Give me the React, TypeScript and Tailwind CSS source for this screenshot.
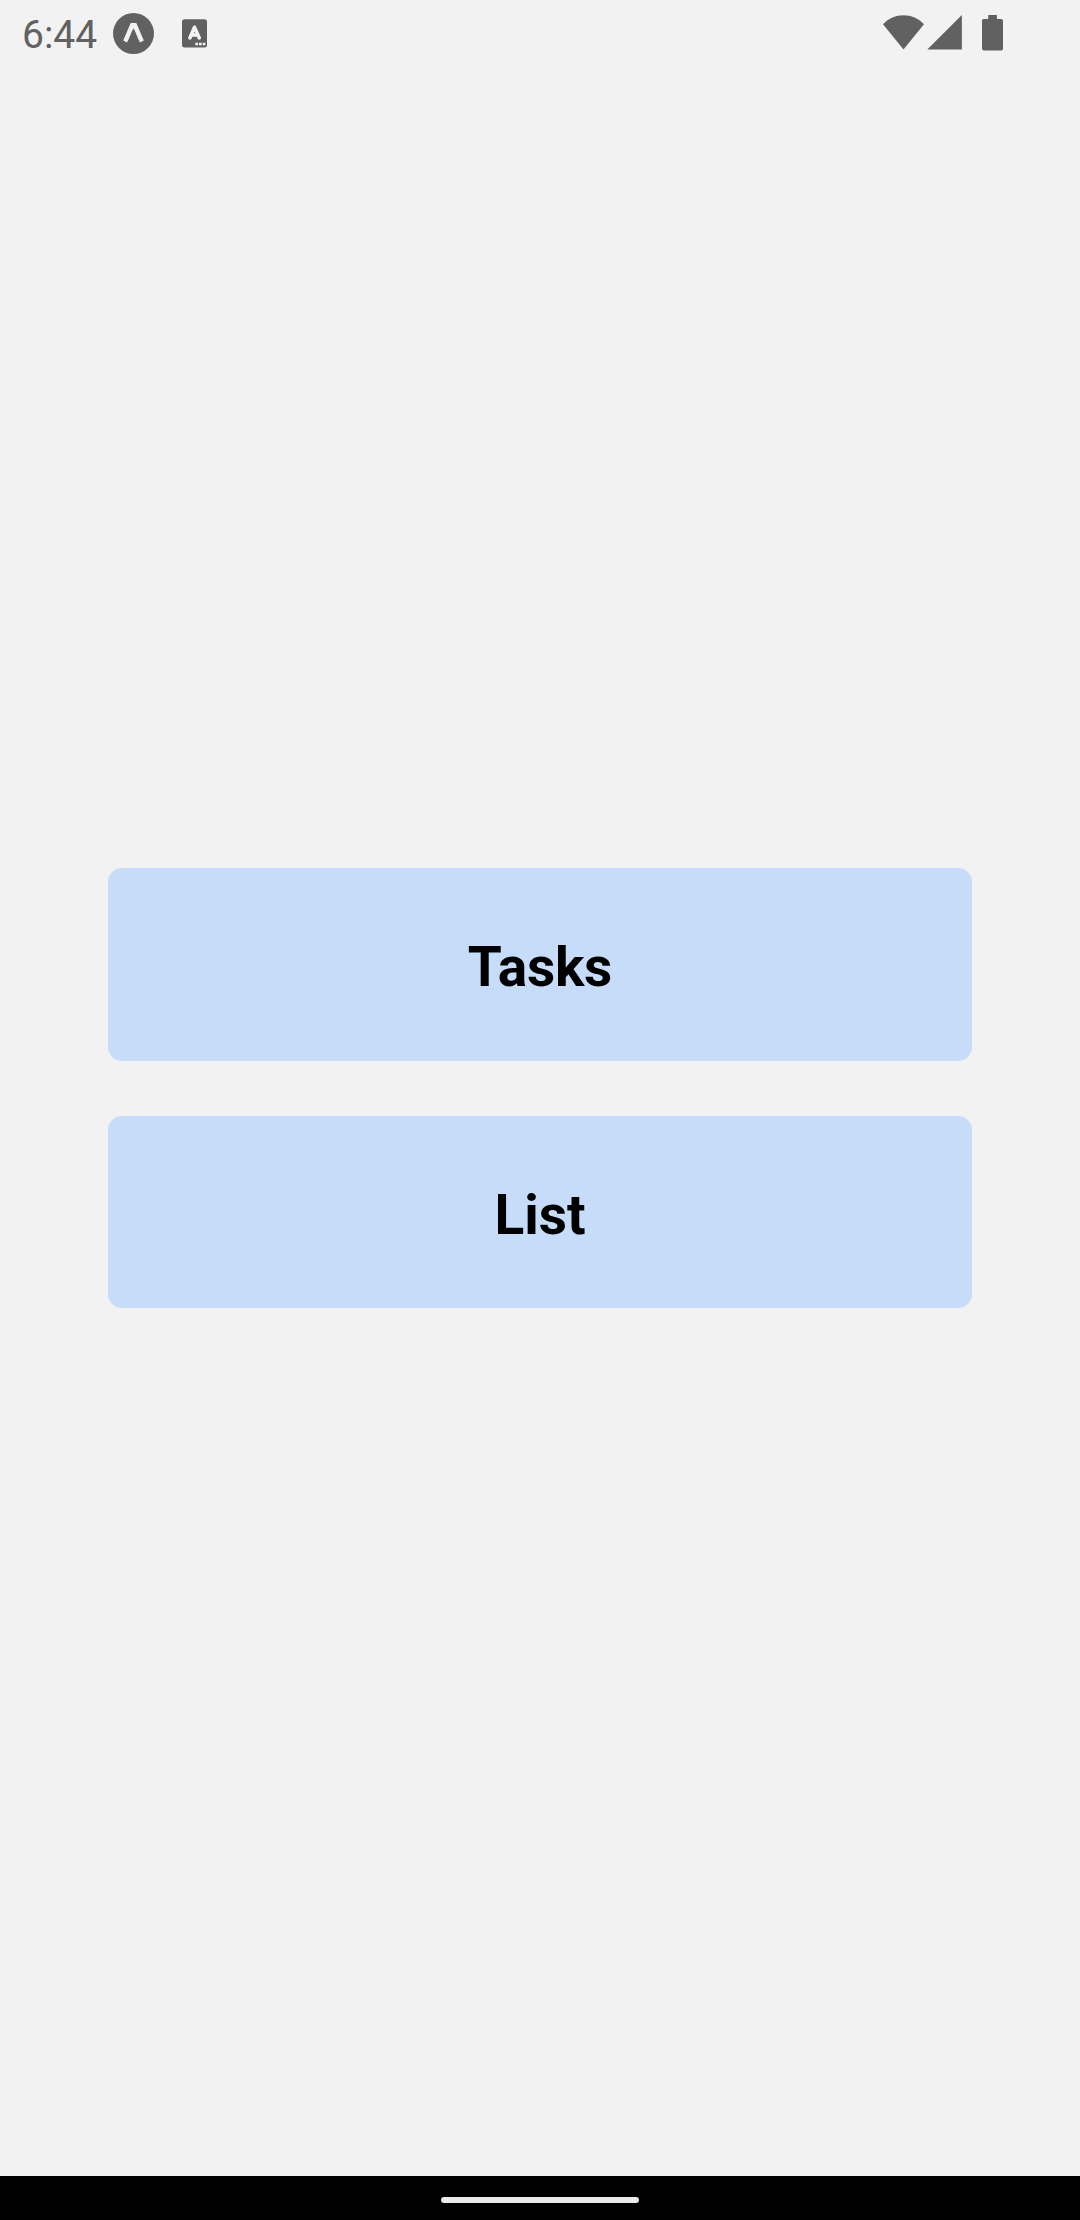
function StatusBar() {
  return (
    <header className="flex h-[66px] shrink-0 items-start text-[#616161]">
      <span className="ml-[22px] mt-[12px] w-[76px] whitespace-nowrap text-[39px] leading-[46px]">
        6:44
      </span>
      <svg className="ml-[15px] mt-[13px]" width="41" height="41" viewBox="0 0 41 41" aria-hidden="true">
        <circle cx="20.5" cy="20.5" r="20.5" fill="currentColor" />
        <path
          d="M17.7 10h5.6l7.5 17.6-3.800 2c-2.200-3.800-4-9.800-6.500-14.300-2.500 4.500-4.300 10.500-6.500 14.300l-3.800-2z"
          fill="#f2f2f2"
        />
      </svg>
      <svg className="ml-[28px] mt-[19px]" width="25" height="29" viewBox="0 0 25 29" aria-hidden="true">
        <rect x="0" y="0.2" width="25" height="28.3" rx="2.5" fill="currentColor" />
        <path
          d="M7.900 19 12.500 8.200 17.300 19M9.500 16h6"
          fill="none"
          stroke="#f2f2f2"
          strokeWidth="3.5"
          strokeLinecap="round"
          strokeLinejoin="round"
        />
        <path d="M13.300 23.800h2.700v2.500h-2.700zM17 23.800h2.700v2.500h-2.700zM20.700 23.800h2.700v2.500h-2.700z" fill="#f2f2f2" />
      </svg>
      <svg className="ml-auto mt-[15px]" width="41" height="35" viewBox="0 0 41 35" aria-hidden="true">
        <path d="M0 9.300C5.700 3.200 12.800 0.200 20.500 0.200S35.300 3.200 41 9.300L20.500 34.500z" fill="currentColor" />
      </svg>
      <svg className="ml-[3px] mt-[15px]" width="35" height="35" viewBox="0 0 35 35" aria-hidden="true">
        <path d="M34.900 0v34.600H0.300z" fill="currentColor" />
      </svg>
      <svg className="ml-[20px] mr-[77px] mt-[15px]" width="21" height="36" viewBox="0 0 21 36" aria-hidden="true">
        <path
          d="M6.200 0h8.700v4h4.300a1.800 1.800 0 0 1 1.800 1.800v28a1.800 1.800 0 0 1-1.800 1.800H1.800A1.800 1.800 0 0 1 0 33.800v-28A1.800 1.800 0 0 1 1.800 4h4.400z"
          fill="currentColor"
        />
      </svg>
    </header>
  );
}

export default function App() {
  return (
    <div className="flex h-[2220px] w-[1080px] flex-col overflow-hidden bg-[#f2f2f2] font-['Roboto',sans-serif]">
      <StatusBar />
      <main className="flex flex-1 flex-col items-center gap-[55px] pt-[802px]">
        <button className="flex h-[193px] w-[864px] items-center justify-center rounded-[14px] bg-[#c7dcf9] pt-[5px] text-[55px] font-bold leading-[64px] tracking-[-0.2px] text-black">
          Tasks
        </button>
        <button className="flex h-[192px] w-[864px] items-center justify-center rounded-[14px] bg-[#c7dcf9] pt-[6px] text-[55px] font-bold leading-[64px] text-black">
          List
        </button>
      </main>
      <nav className="flex h-[44px] shrink-0 items-center justify-center bg-black pt-[4px]">
        <div className="h-[6px] w-[198px] rounded-full bg-[#ebebeb]" />
      </nav>
    </div>
  );
}
